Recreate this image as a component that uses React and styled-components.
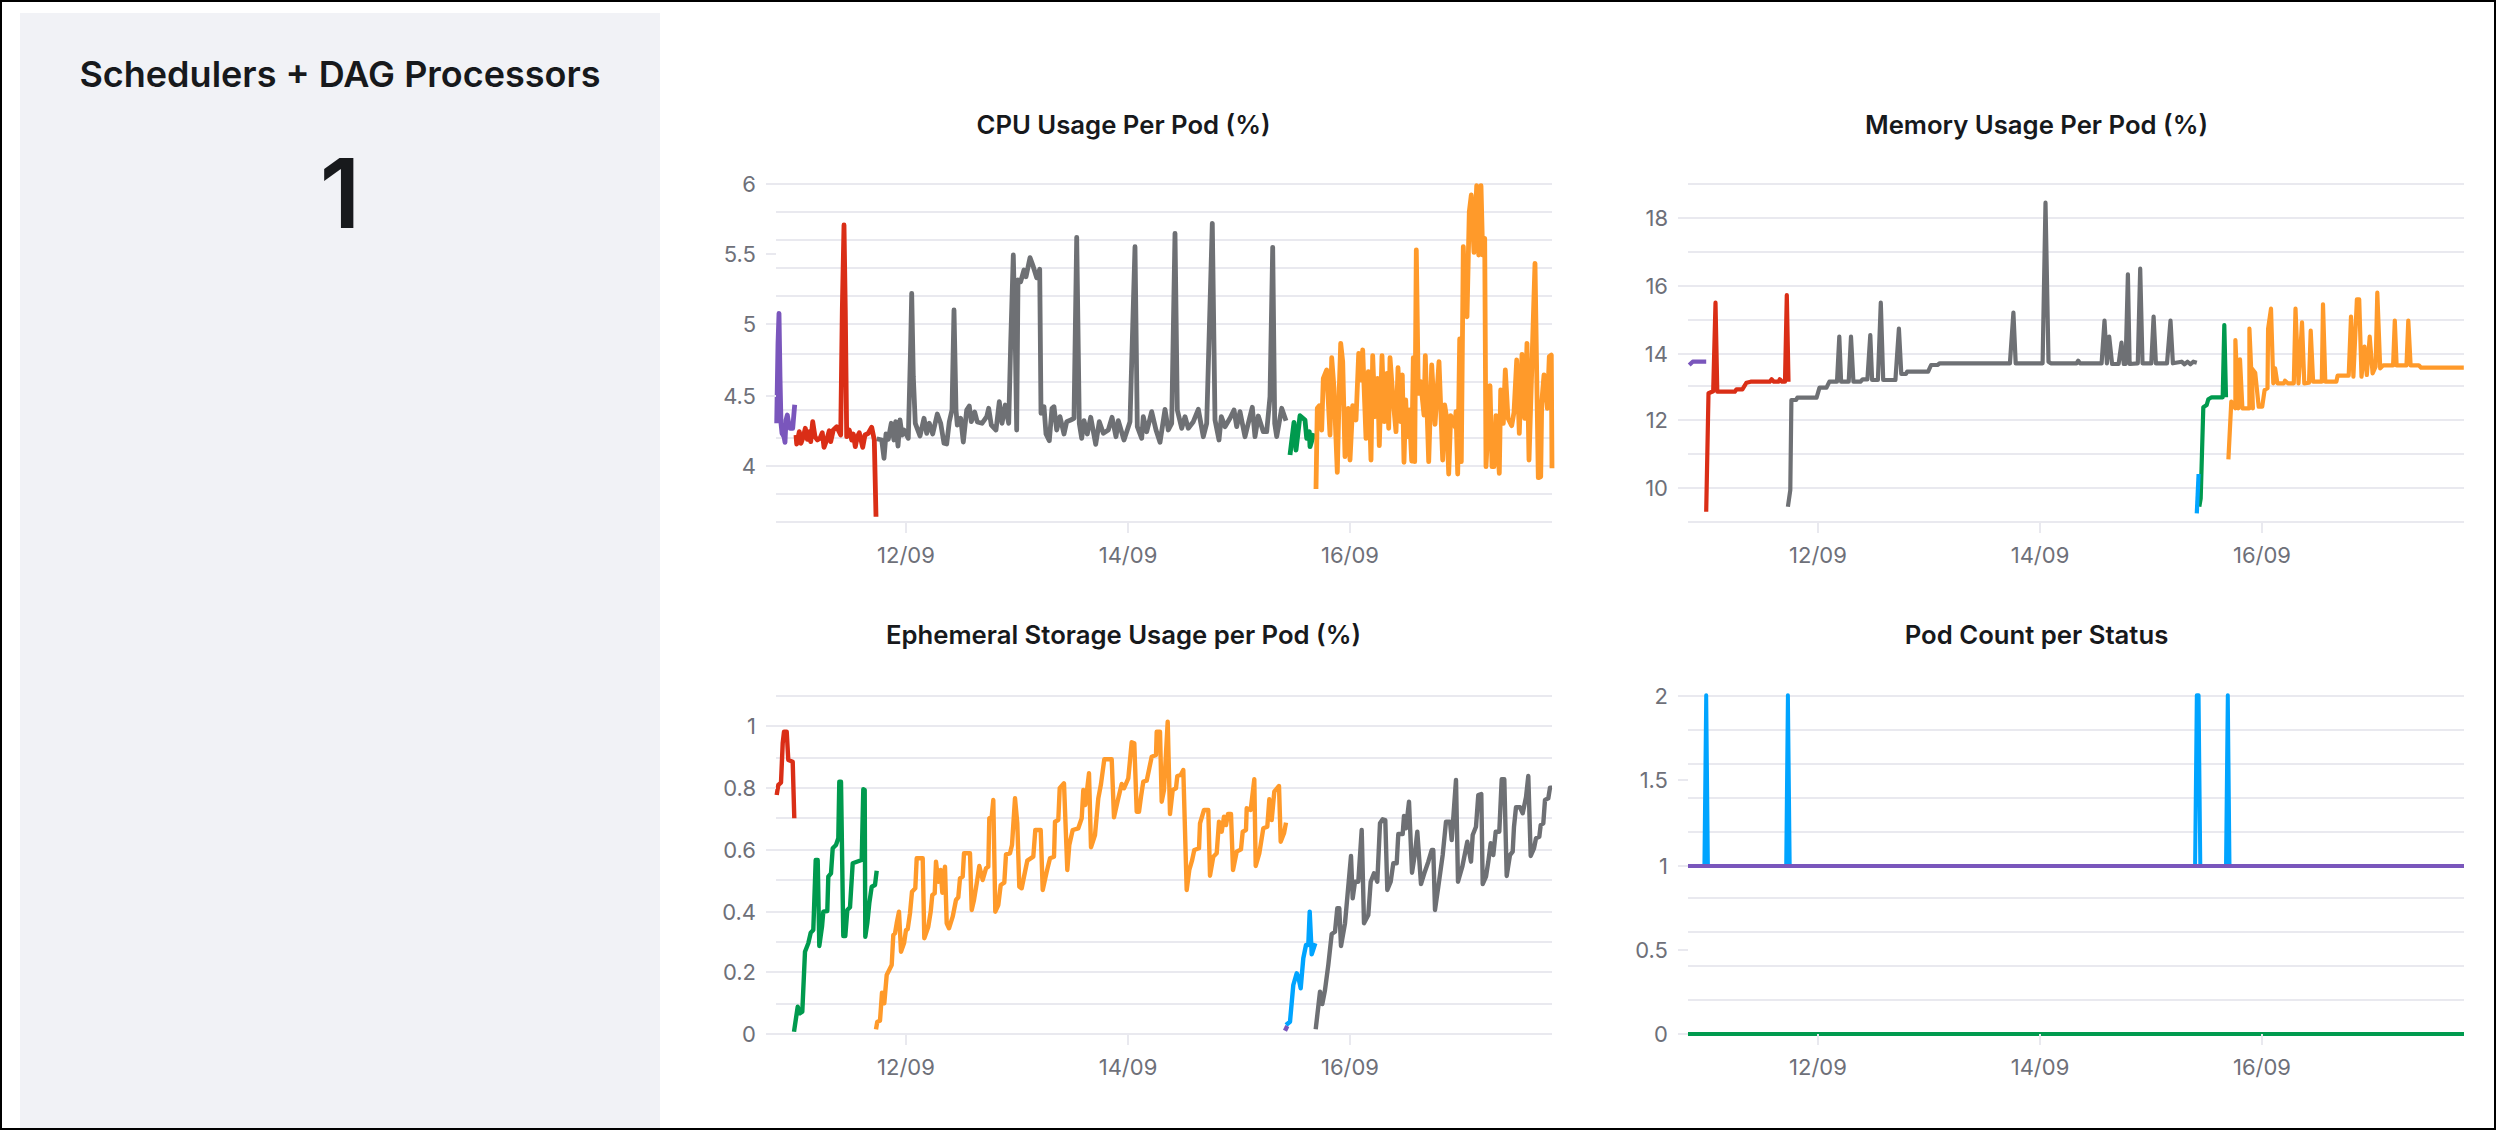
import React from 'react'
import styled, { createGlobalStyle } from 'styled-components'

const GRAY = '#6e7074'
const PURPLE = '#7a56bc'
const RED = '#da2e16'
const GREEN = '#009a4e'
const ORANGE = '#ff9a2a'
const BLUE = '#00a4ff'

// points are read off the picture at a given scale, then moved to page coordinates
const trace = (ox, oy, pts, sx = 3, sy = 3) =>
    pts.trim().split(/\s+/).map((p) => {
        const [x, y] = p.split(',')
        return `${(ox + x / sx).toFixed(1)},${(oy + y / sy).toFixed(1)}`
    }).join(' ')

const cpuSeries = [
    { color: GRAY, points: trace(770, 210, '320,686 335,690 342,745 348,672 355,688 364,640 372,690 377,635 384,708 390,630 396,675 402,660 415,685 422,400 425,250 430,500 436,640 450,678 462,625 470,670 478,640 488,672 502,612 512,640 522,700 530,702 538,635 546,600 552,300 558,600 562,645 572,625 580,696 590,600 598,588 604,635 614,606 622,636 636,640 650,620 656,595 664,645 678,660 688,575 696,640 706,585 716,640 722,400 730,135 736,400 740,660 744,210 752,215 762,180 768,200 780,143 790,170 800,203 809,178 813,610 822,590 828,672 838,692 846,595 852,590 860,660 870,620') + ' ' + trace(1050, 210, '30,620 42,672 50,635 62,630 72,625 80,82 88,640 95,685 102,632 112,672 122,622 137,703 148,635 160,670 175,660 186,622 198,680 205,632 222,690 240,635 255,110 262,650 275,685 280,620 290,665 305,605 318,660 330,697 345,598 355,660 365,640 375,70 382,600 395,655 405,620 415,655 430,635 445,598 460,680 470,640 487,40 495,630 507,690 514,620 525,650 540,625 552,600 560,650 570,605 585,680 595,640 607,592 615,680 625,618 640,665 650,665 660,560 668,112 674,640 680,680 695,595 708,632') },
    { color: PURPLE, points: trace(770, 210, '20,640 24,400 27,310 30,500 33,640 36,670 42,680 45,697 48,630 52,615 56,640 60,655 68,655 74,584') },
    { color: RED, points: trace(770, 210, '78,675 80,702 88,665 93,700 100,680 106,655 112,688 118,665 122,695 128,635 135,680 142,690 150,685 157,668 162,712 170,690 178,662 182,695 190,660 200,650 212,675 217,300 222,45 226,300 230,680 238,660 245,690 250,672 256,710 262,680 268,668 278,712 285,675 295,670 305,652 313,690 318,920') },
    { color: GREEN, points: trace(1290, 175, '0,840 12,742 18,825 30,722 45,735 50,790 58,770 60,815 72,775') },
    { color: ORANGE, points: trace(1290, 175, '78,942 82,700 88,692 95,765 100,610 110,585 120,780 125,548 132,640 142,892 148,640 152,505 158,560 165,845 175,700 180,855 188,692 198,735 206,535 213,615 218,525 228,790 235,590 243,855 248,542 255,725 263,610 268,812 276,542 283,740 291,595 296,760 300,548 309,670 318,770 324,578 332,740 337,600 342,862 347,675 352,785 358,705 365,858 370,548 374,860 379,225 385,655 392,620 402,720 406,542 416,860 425,570 435,748 447,560 458,855 464,690 470,730 476,897 482,722 495,755 498,710 503,897 509,492 514,860 520,215 527,420 531,425 538,110 544,60 552,232 560,32 566,240 573,32 578,240 584,190 588,875 600,632 606,875 612,875 618,722 628,895 632,645 640,745 646,585 654,730 665,752 672,712 680,555 688,775 696,538 704,730 711,505 717,855 735,265 745,908 752,905 755,685 762,600 772,700 778,545 784,540 786,880') },
]

const mem = (pts) => trace(1580, 90, pts, 1.712, 3)

const memorySeries = [
    { color: PURPLE, points: mem('187,825 193,815 216,815') },
    { color: RED, points: mem('216,1265 220,910 228,904 232,638 235,905 265,905 268,898 278,898 285,878 292,875 325,875 328,868 332,875 340,875 342,868 346,875 351,875 354,615 357,875') },
    { color: GRAY, points: mem('356,1250 360,1200 362,930 370,930 372,923 405,923 410,893 422,893 427,875 440,875 444,740 447,875 460,875 464,740 468,875 480,875 484,868 492,868 497,735 500,870 510,870 515,638 519,870 540,870 546,716 550,852 558,852 560,845 596,845 601,825 612,825 616,820 736,820 742,668 746,820 792,820 797,338 802,815 806,820 850,820 853,812 856,820 893,820 898,692 902,820 906,740 911,822 922,822 927,758 931,822 934,822 938,553 941,822 955,820 959,536 963,820 978,820 982,680 986,820 1005,820 1011,692 1015,820 1030,815 1035,823 1040,815 1045,823 1050,815 1056,818') },
    { color: GREEN, points: trace(2190, 320, '28,560 32,535 40,262 50,255 55,238 65,232 98,232 103,15 108,232') },
    { color: BLUE, points: mem('1056,1270 1059,1152') },
    { color: ORANGE, points: mem('1110,1108 1115,935 1122,955 1122,750 1127,955 1130,808 1134,955 1146,955 1146,716 1152,955 1150,835 1156,848 1162,950 1168,950 1172,900 1177,895 1178,716 1183,656 1187,880 1190,835 1194,880 1205,880 1207,872 1212,880 1222,880 1225,656 1230,880 1236,697 1240,880 1248,878 1251,722 1255,875 1270,875 1272,643 1276,875 1295,875 1297,857 1316,857 1320,680 1324,860 1330,628 1334,628 1338,860 1343,770 1347,855 1352,740 1357,850 1362,830 1365,608 1370,835 1375,826 1392,826 1395,692 1398,826 1415,826 1418,692 1422,826 1436,826 1440,833 1513,833') },
]

const storageSeries = [
    { color: RED, points: trace(770, 710, '20,255 25,225 33,218 38,100 42,65 50,65 55,150 68,155 73,325') },
    { color: GREEN, points: trace(770, 710, '72,965 83,890 90,910 97,905 105,725 115,700 122,668 130,660 137,450 143,450 148,708 156,650 160,605 172,603 175,500 183,490 188,415 198,405 205,385 208,215 213,215 220,678 226,678 232,600 240,592 248,460 275,450 280,238 284,240 286,680 292,640 298,580 305,530 315,525 320,482') },
    { color: ORANGE, points: trace(770, 710, '318,958 322,935 330,932 336,848 343,880 350,795 365,765 370,675 375,670 380,640 387,605 393,725 402,700 408,660 413,658 420,610 426,545 436,535 440,445 458,445 463,685 475,650 482,605 487,555 494,550 498,455 505,515 512,480 517,548 525,470 530,640 537,655 548,620 558,570 565,562 570,505 578,500 582,430 600,430 605,600 612,570 620,520 628,468 638,510 648,475 655,470 658,325 665,320 670,270 676,605 685,585 692,525 703,518 708,433 720,430 726,405 735,265 742,340 748,530 755,535 762,500 772,452 790,440 796,360 812,360 818,540 830,485 840,445 852,440 855,335 865,330 869,235 882,220 892,480 898,405 908,360 925,355 935,325 940,240 946,285 957,190 963,412 975,375 985,265 993,222 1003,148 1025,148 1032,322 1045,265 1055,222 1062,235 1075,205 1085,97 1093,100 1100,305 1107,305 1113,260 1120,215 1130,212 1138,175 1145,140 1158,135 1160,65 1170,65') + ' ' + trace(1160, 710, '5,275 12,240 23,35 30,312 38,240 48,235 52,198 62,195 70,180 80,540 88,480 96,452 103,420 117,415 120,340 132,300 145,300 150,497 160,440 170,430 177,335 185,365 192,320 198,345 204,312 213,312 219,480 230,425 243,418 248,365 258,360 260,295 272,300 283,208 287,468 298,430 310,355 322,350 328,268 335,330 343,245 357,228 362,395 372,370 378,338') },
    { color: BLUE, points: trace(1160, 710, '378,945 390,935 400,825 410,790 415,800 422,835 430,745 438,705 445,705 449,605 455,733 466,700') },
    { color: PURPLE, points: trace(1160, 710, '375,962 382,948') },
    { color: GRAY, points: trace(1160, 710, '467,958 480,845 487,882 495,840 505,765 515,672 525,665 532,595 538,595 543,708 555,640 573,438 578,565 585,515 595,515 605,360 612,640 625,615 632,515 642,490 652,515 660,340 668,328 676,330 682,540 692,515 700,460 710,460 715,372 728,372 732,318 738,355 747,275 756,488 765,430 772,365 783,522 793,490 805,455 815,420 820,420 825,600 835,530 848,435 858,335 870,335 875,390 888,210 894,515 907,470 922,395 933,455 938,375 948,350 955,255 964,252 968,522 978,500 985,455 992,400 1000,435 1007,365 1018,365 1025,208 1033,208 1040,498 1050,435 1058,425 1062,350 1068,292 1080,292 1088,310 1098,262 1105,198 1112,438 1122,415 1128,385 1138,380 1142,345 1150,340 1155,270 1165,265 1170,233 1176,233') },
]

const pod = (pts) => trace(1580, 600, pts, 1.712, 2.958)

const podSeries = [
    { color: BLUE, points: pod('213,787 216,282 219,787') },
    { color: BLUE, points: pod('353,787 356,282 359,787') },
    { color: BLUE, points: pod('1053,787 1056,282 1059,282 1062,787') },
    { color: BLUE, points: pod('1106,787 1109,282 1112,787') },
    { color: PURPLE, points: '1688,866 2464,866' },
    { color: GREEN, points: '1688,1034 2464,1034' },
]

const charts = [
    {
        title: 'CPU Usage Per Pod (%)',
        view: [667, 145],
        left: 776,
        right: 1552,
        base: 522,
        dates: [906, 1128, 1350],
        dateY: 555,
        grid: [184, 212, 240, 268, 296, 324, 354, 382, 410, 438, 466, 494, 522],
        labels: [['6', 184], ['5.5', 254], ['5', 324], ['4.5', 396], ['4', 466]],
        series: cpuSeries,
        lineWidth: 4.8,
    },
    {
        title: 'Memory Usage Per Pod (%)',
        view: [1580, 145],
        left: 1688,
        right: 2464,
        base: 522,
        dates: [1818, 2040, 2262],
        dateY: 555,
        grid: [184, 218, 252, 286, 320, 354, 386, 420, 454, 488, 522],
        labels: [['18', 218], ['16', 286], ['14', 354], ['12', 420], ['10', 488]],
        series: memorySeries,
        lineWidth: 4.2,
    },
    {
        title: 'Ephemeral Storage Usage per Pod (%)',
        view: [667, 655],
        left: 776,
        right: 1552,
        base: 1034,
        dates: [906, 1128, 1350],
        dateY: 1067,
        grid: [696, 726, 758, 788, 818, 850, 880, 912, 942, 972, 1004, 1034],
        labels: [['1', 726], ['0.8', 788], ['0.6', 850], ['0.4', 912], ['0.2', 972], ['0', 1034]],
        series: storageSeries,
        lineWidth: 4.4,
    },
    {
        title: 'Pod Count per Status',
        view: [1580, 655],
        left: 1688,
        right: 2464,
        base: 1034,
        dates: [1818, 2040, 2262],
        dateY: 1067,
        grid: [696, 730, 764, 798, 832, 866, 898, 932, 966, 1000, 1034],
        labels: [['2', 696], ['1.5', 780], ['1', 866], ['0.5', 950], ['0', 1034]],
        series: podSeries,
        lineWidth: 4,
    },
]

const GlobalStyle = createGlobalStyle`
    html, body {
        margin: 0;
        background: #ffffff;
    }
    body {
        font-family: "Inter", "Liberation Sans", sans-serif;
    }
`

const Page = styled.div`
    box-sizing: border-box;
    display: flex;
    width: 2496px;
    height: 1130px;
    border: 2px solid #000000;
    overflow: hidden;
`

const Sidebar = styled.aside`
    flex: 0 0 640px;
    margin: 11px 7px 0 18px;
    padding-top: 39px;
    background: #f1f2f6;
    text-align: center;
    color: #17191c;
`

const SidebarTitle = styled.h2`
    margin: 0;
    font-size: 36px;
    line-height: 44px;
    font-weight: 600;
`

const BigNumber = styled.div`
    margin-top: 39px;
    font-size: 96px;
    line-height: 116px;
    font-weight: 600;
`

const ChartGrid = styled.main`
    display: grid;
    grid-template-columns: 913px 913px;
    grid-auto-rows: 510px;
    padding-top: 103px;
`

const ChartCell = styled.section`
    display: flex;
    flex-direction: column;
`

const ChartTitle = styled.h3`
    margin: 0;
    height: 40px;
    font-size: 25.7px;
    line-height: 40px;
    font-weight: 600;
    text-align: center;
    color: #17191c;
`

const ChartSvg = styled.svg`
    display: block;
    width: 913px;
    height: 470px;
`

const GridLine = styled.line`
    stroke: #e9e9ef;
    stroke-width: 2;
`

const Series = styled.polyline`
    fill: none;
    stroke: ${(props) => props.$color};
    stroke-width: ${(props) => props.$width};
    stroke-linejoin: round;
`

const AxisText = styled.text`
    font-family: "Inter", "Liberation Sans", sans-serif;
    font-size: 22px;
    fill: #6e7079;
    dominant-baseline: central;
    text-anchor: ${(props) => props.$anchor};
`

function Chart({ chart }) {
    const { title, view, left, right, base, dates, dateY, grid, labels, series, lineWidth } = chart
    return (
        <ChartCell>
            <ChartTitle>{title}</ChartTitle>
            <ChartSvg viewBox={`${view[0]} ${view[1]} 913 470`}>
                {grid.map((y) => (
                    <GridLine key={y} x1={left} x2={right} y1={y} y2={y} />
                ))}
                {series.map((s, i) => (
                    <Series key={i} $color={s.color} $width={lineWidth} points={s.points} />
                ))}
                {labels.map(([text, y]) => (
                    <g key={text}>
                        <GridLine x1={left - 10} x2={left} y1={y} y2={y} />
                        <AxisText $anchor="end" x={left - 20} y={y}>{text}</AxisText>
                    </g>
                ))}
                {dates.map((x, i) => (
                    <g key={x}>
                        <GridLine x1={x} x2={x} y1={base} y2={base + 11} />
                        <AxisText $anchor="middle" x={x} y={dateY}>{['12/09', '14/09', '16/09'][i]}</AxisText>
                    </g>
                ))}
            </ChartSvg>
        </ChartCell>
    )
}

function App() {
    return (
        <>
            <GlobalStyle />
            <Page>
                <Sidebar>
                    <SidebarTitle>Schedulers + DAG Processors</SidebarTitle>
                    <BigNumber>1</BigNumber>
                </Sidebar>
                <ChartGrid>
                    {charts.map((chart) => (
                        <Chart key={chart.title} chart={chart} />
                    ))}
                </ChartGrid>
            </Page>
        </>
    )
}

export default App
